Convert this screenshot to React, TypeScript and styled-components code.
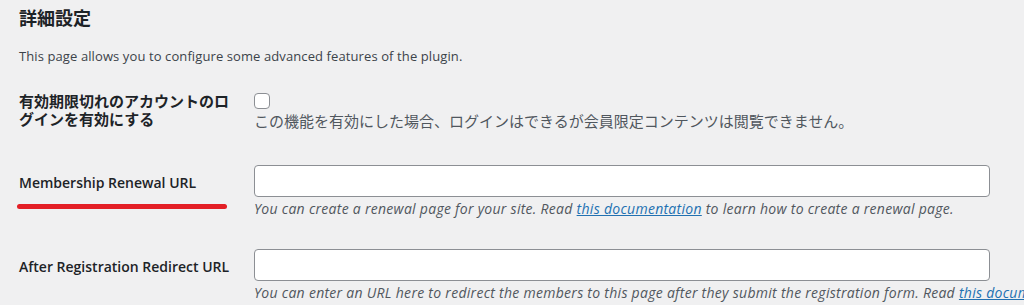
import React from "react";
import styled, { createGlobalStyle } from "styled-components";

const GlobalStyle = createGlobalStyle`
  html, body {
    margin: 0;
    padding: 0;
    background: #f0f0f1;
    overflow: hidden;
  }
  body {
    font-family: "Open Sans", "Noto Sans CJK JP", sans-serif;
    color: #3c434a;
  }
`;

const Page = styled.div`
  padding: 0 0 0 19px;
  width: 1100px;
`;

const Title = styled.h2`
  margin: 0;
  padding-top: 6px;
  font-family: "Noto Sans CJK JP", sans-serif;
  font-size: 18px;
  font-weight: 700;
  line-height: 1.3;
  color: #1d2327;
`;

const Intro = styled.p`
  margin: 18px 0 0;
  font-size: 13px;
  letter-spacing: 0.1px;
  line-height: 1.5;
  color: #3c434a;
`;

const FieldRow = styled.div<{ $top: number }>`
  display: grid;
  grid-template-columns: 215px 736px;
  column-gap: 20px;
  padding-top: ${(p) => p.$top}px;
`;

const Label = styled.div<{ $offset: number; $ja?: boolean }>`
  padding-top: ${(p) => p.$offset}px;
  font-family: "Open Sans", "Noto Sans CJK JP", sans-serif;
  font-size: ${(p) => (p.$ja ? 15 : 14)}px;
  font-weight: 600;
  line-height: 18px;
  color: #1d2327;
`;

const Marker = styled.span`
  display: block;
  width: 210px;
  height: 5px;
  margin: 12px 0 0 -2px;
  border-radius: 3px;
  background: #e31f26;
`;

const Field = styled.div`
  display: flex;
  flex-direction: column;
`;

const Checkbox = styled.span`
  display: block;
  width: 16px;
  height: 16px;
  box-sizing: border-box;
  border: 1px solid #8c8f94;
  border-radius: 4px;
  background: #fff;
  margin-top: 1px;
`;

const Note = styled.p`
  margin: 2px 0 0;
  font-family: "Open Sans", "Noto Sans CJK JP", sans-serif;
  font-size: 15px;
  line-height: 21px;
  color: #50575e;
`;

const Input = styled.input`
  display: block;
  width: 736px;
  height: 32px;
  box-sizing: border-box;
  border: 1px solid #8c8f94;
  border-radius: 4px;
  background: #fff;
  padding: 0 8px;
  margin: 0;
  font-size: 14px;
`;

const Description = styled.p`
  margin: 1px 0 0;
  font-size: 14px;
  font-style: italic;
  letter-spacing: 0.28px;
  line-height: 1.5;
  color: #50575e;
  white-space: nowrap;
`;

const DocLink = styled.a`
  color: #2271b1;
  text-decoration: underline;
`;

export default function App() {
  return (
    <>
      <GlobalStyle />
      <Page>
        <Title>詳細設定</Title>
        <Intro>This page allows you to configure some advanced features of the plugin.</Intro>

        <FieldRow $top={25}>
          <Label $offset={0} $ja>
            有効期限切れのアカウントのログインを有効にする
          </Label>
          <Field>
            <Checkbox />
            <Note>この機能を有効にした場合、ログインはできるが会員限定コンテンツは閲覧できません。</Note>
          </Field>
        </FieldRow>

        <FieldRow $top={33}>
          <Label $offset={9}>
            Membership Renewal URL
            <Marker />
          </Label>
          <Field>
            <Input type="text" />
            <Description>
              You can create a renewal page for your site. Read{" "}
              <DocLink href="#">this documentation</DocLink> to learn how to create a renewal page.
            </Description>
          </Field>
        </FieldRow>

        <FieldRow $top={30}>
          <Label $offset={9}>After Registration Redirect URL</Label>
          <Field>
            <Input type="text" />
            <Description>
              You can enter an URL here to redirect the members to this page after they submit the
              registration form. Read <DocLink href="#">this documentation</DocLink> to learn more.
            </Description>
          </Field>
        </FieldRow>
      </Page>
    </>
  );
}
